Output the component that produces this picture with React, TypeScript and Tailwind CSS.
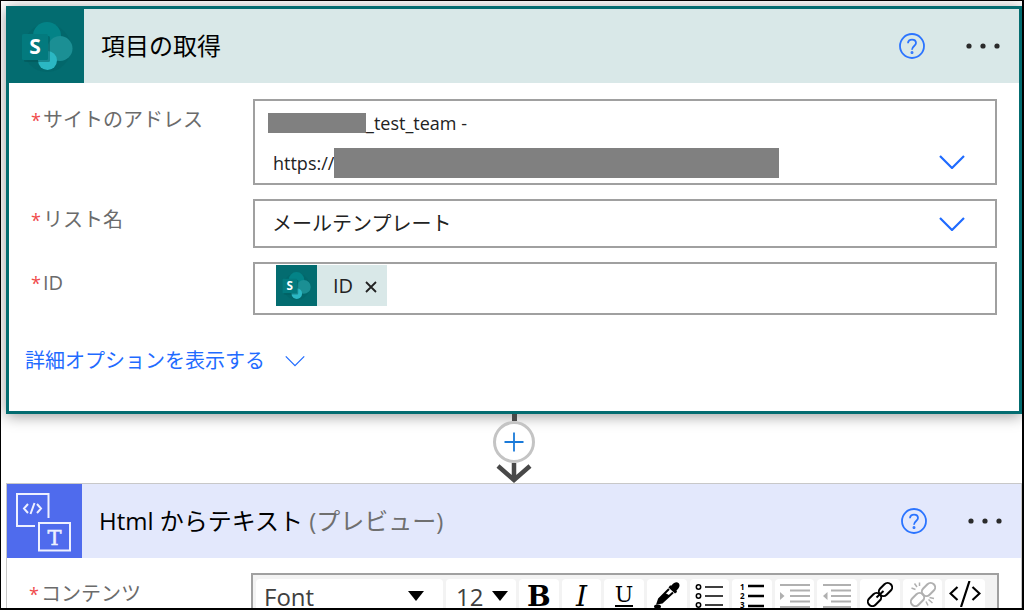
import type { ReactNode } from 'react';

const SITE_LINES = { name: '_test_team -', url: 'https://' };

function SharePointIcon({ className }: { className: string }) {
  return (
    <svg viewBox="0 0 52 52" className={className} aria-hidden="true">
      <circle cx="26" cy="28" r="24" fill="#025e62" opacity="0.35" />
      <circle cx="26" cy="16" r="14" fill="#038387" />
      <circle cx="39" cy="28.5" r="12.5" fill="#1b8f94" />
      <circle cx="26.5" cy="40.5" r="9.5" fill="#2bb7c3" />
      <rect x="3" y="16" width="26" height="26" rx="1.5" fill="#024f52" opacity="0.45" />
      <rect x="1" y="14" width="26" height="26" rx="1.5" fill="#037a7e" />
      <text x="14" y="34" textAnchor="middle" fontSize="21" fontWeight="700" fontFamily="Open Sans, sans-serif" fill="#fff">
        S
      </text>
    </svg>
  );
}

function HtmlToTextIcon() {
  return (
    <svg viewBox="0 0 74 74" className="w-[74px] h-[74px]" fill="none" stroke="#eef0ff" strokeWidth="2" aria-hidden="true">
      <path d="M28 42H10V10H41.500V34" />
      <path d="M21 20l-4 4.500l4 4.500M30 20l4 4.500l-4 4.500M27.500 19l-4 11" />
      <rect x="32" y="39" width="31" height="27.500" />
      <text x="47.500" y="60.500" textAnchor="middle" fontSize="21" fontFamily="DejaVu Serif, serif" fill="#eef0ff" stroke="#eef0ff" strokeWidth="0.500">
        T
      </text>
    </svg>
  );
}

function Chevron({ className, strokeWidth }: { className: string; strokeWidth: number }) {
  return (
    <svg viewBox="0 0 26 14" className={className} fill="none" stroke="#1f6bff" strokeWidth={strokeWidth} aria-hidden="true">
      <path d="M1 1L13 13L25 1" />
    </svg>
  );
}

function HeaderActions() {
  return (
    <div className="flex items-center gap-10 pr-[18px]">
      <button aria-label="ヘルプ">
        <svg viewBox="0 0 26 26" className="w-[26px] h-[26px]" fill="none" stroke="#2b74ff" strokeWidth="1.8">
          <circle cx="13" cy="13" r="12" />
          <path d="M9 10.300C9 7.800 10.700 6.600 13 6.600S17 8 17 10.100C17 13 13 13.200 13 16.800" />
          <circle cx="13" cy="19.600" r="0.600" fill="#2b74ff" />
        </svg>
      </button>
      <button aria-label="その他">
        <svg viewBox="0 0 36 8" className="w-9 h-2" fill="#2b2b2b">
          <circle cx="4" cy="4" r="2.600" />
          <circle cx="18" cy="4" r="2.600" />
          <circle cx="32" cy="4" r="2.600" />
        </svg>
      </button>
    </div>
  );
}

function FieldLabel({ htmlFor, children }: { htmlFor: string; children: ReactNode }) {
  return (
    <label htmlFor={htmlFor} className="flex pt-[7px] text-xl leading-7 text-[#6b6b6b]">
      <span className="w-3 text-lg leading-7 text-[#f04a4a]">*</span>
      {children}
    </label>
  );
}

function ToolButton({ label, disabled, children }: { label: string; disabled?: boolean; children: ReactNode }) {
  return (
    <button
      aria-label={label}
      disabled={disabled}
      className="flex-1 h-10 pt-1.5 flex items-start justify-center rounded-sm bg-white text-black disabled:text-[#b0b0b0]"
    >
      {children}
    </button>
  );
}

function Triangle() {
  return (
    <svg viewBox="0 0 16 10" className="w-4 h-2.5 absolute right-0 top-3 pointer-events-none" aria-hidden="true">
      <path d="M0 0H16L8 10Z" />
    </svg>
  );
}

function EditorToolbar() {
  return (
    <div className="flex gap-[3px] bg-[#f3f3f3] pt-1 pl-[3px] pr-3 pb-1">
      <div className="w-[187px] h-10 bg-white rounded-sm pl-1 pr-[19px]">
        <div className="relative">
          <select id="content" aria-label="フォント" className="w-full h-9 pl-1 appearance-none text-2xl leading-9 text-[#404040]">
            <option>Font</option>
          </select>
          <Triangle />
        </div>
      </div>
      <div className="w-[70px] h-10 bg-white rounded-sm pl-2 pr-2">
        <div className="relative">
          <select aria-label="フォント サイズ" className="w-full h-9 pl-0.5 appearance-none text-2xl leading-9 text-[#404040]">
            <option>12</option>
          </select>
          <Triangle />
        </div>
      </div>
      <ToolButton label="太字">
        <span className="font-['DejaVu_Serif',serif] font-bold text-[28px] leading-6">B</span>
      </ToolButton>
      <ToolButton label="斜体">
        <span className="font-['DejaVu_Serif',serif] italic text-[28px] leading-6">I</span>
      </ToolButton>
      <ToolButton label="下線">
        <span className="font-['DejaVu_Serif',serif] text-[22px] leading-5 border-b-2">U</span>
      </ToolButton>
      <ToolButton label="色">
        <svg viewBox="0 0 28 28" className="w-7 h-7 -mt-1">
          <path d="M18.500 4.500C21 1 24 0.500 25.500 2C27.500 4 26.500 7 23.500 9.500L24 11L22 12.500L15.500 6.500L17 4.500Z" />
          <path d="M16 8L6 18L4.500 22.500L9 21.500L20 11.500" fill="#fff" stroke="#000" strokeWidth="2" />
          <path d="M12 12L5.500 18.500L4.500 22.500L9 21.500L17 14.500Z" />
          <ellipse cx="4.500" cy="25.500" rx="3.500" ry="2" />
        </svg>
      </ToolButton>
      <ToolButton label="箇条書き">
        <svg viewBox="0 0 28 26" className="w-7 h-[26px] -mt-0.5" fill="none" stroke="currentColor" strokeWidth="1.500">
          <circle cx="3.500" cy="4" r="2.200" />
          <circle cx="3.500" cy="13" r="2.200" />
          <circle cx="3.500" cy="22" r="2.200" />
          <path d="M10 4H28M10 13H28M10 22H28" />
        </svg>
      </ToolButton>
      <ToolButton label="番号付きリスト">
        <svg viewBox="0 0 24 26" className="w-6 h-[26px] -mt-0.5" fill="none" stroke="currentColor" strokeWidth="2.500">
          <path d="M8 3H24M8 13H24M8 23H24" />
          <g stroke="none" fill="currentColor" fontSize="8" fontWeight="700" fontFamily="Open Sans, sans-serif">
            <text x="0" y="7">1</text>
            <text x="0" y="16">2</text>
            <text x="0" y="25">3</text>
          </g>
        </svg>
      </ToolButton>
      <ToolButton label="インデント" disabled>
        <svg viewBox="0 0 30 26" className="w-[30px] h-[26px] -mt-0.5" stroke="currentColor" strokeWidth="1.800">
          <path d="M0 2H30M10 7.500H30M10 13H30M10 18.500H30M0 24H30" />
          <path d="M0 9L4.500 13L0 17Z" fill="currentColor" stroke="none" />
        </svg>
      </ToolButton>
      <ToolButton label="インデント解除" disabled>
        <svg viewBox="0 0 28 26" className="w-7 h-[26px] -mt-0.5" stroke="currentColor" strokeWidth="1.800">
          <path d="M0 2H28M8 7.500H28M8 13H28M8 18.500H28M0 24H28" />
          <path d="M4.500 9L0 13L4.500 17Z" fill="currentColor" stroke="none" />
        </svg>
      </ToolButton>
      <ToolButton label="リンク">
        <svg viewBox="0 0 26 26" className="w-[26px] h-[26px] -mt-1" fill="none" stroke="currentColor" strokeWidth="2">
          <rect x="11" y="4" width="15" height="9" rx="4.500" transform="rotate(-45 18.500 8.500)" />
          <rect x="0" y="14" width="15" height="9" rx="4.500" transform="rotate(-45 7.500 18.500)" />
          <path d="M9.500 16.500L16.500 10" />
        </svg>
      </ToolButton>
      <ToolButton label="リンク解除" disabled>
        <svg viewBox="0 0 26 26" className="w-[26px] h-[26px] -mt-1" fill="none" stroke="currentColor" strokeWidth="2">
          <rect x="11" y="4" width="15" height="9" rx="4.500" transform="rotate(-45 18.500 8.500)" />
          <rect x="0" y="14" width="15" height="9" rx="4.500" transform="rotate(-45 7.500 18.500)" />
          <path d="M1.500 7L5.500 8.500M4.500 2.500L7 6M9.500 1.500V5M16 20.500L18 24.500M18.500 18.500L22.500 22M19.500 16.500L24 17.500" strokeWidth="1.500" />
        </svg>
      </ToolButton>
      <ToolButton label="コード表示">
        <svg viewBox="0 0 32 26" className="w-8 h-[26px] -mt-1" fill="none" stroke="currentColor" strokeWidth="2.200">
          <path d="M8.500 6L1.500 12.500L8.500 19M23.500 6L30.500 12.500L23.500 19M20.500 0L12 26" />
        </svg>
      </ToolButton>
    </div>
  );
}

export default function App() {
  return (
    <div className="h-screen overflow-hidden border-t border-l border-r-2 border-b-2 border-black bg-white pt-[5px] pl-[5px] font-['Open_Sans','Noto_Sans_CJK_JP',sans-serif]">
      {/* 項目の取得 */}
      <section className="border-[3px] border-[#036c70] bg-white shadow-[0_2px_14px_rgba(0,0,0,0.4)]">
        <header className="flex items-center bg-[#d9e8e8]">
          <div className="w-[75px] h-[74px] flex items-center justify-center bg-[#036c70]">
            <SharePointIcon className="w-[52px] h-[52px]" />
          </div>
          <h2 className="flex-1 pl-[17px] text-2xl text-black">項目の取得</h2>
          <HeaderActions />
        </header>

        <div className="grid grid-cols-[222px_1fr] gap-y-3.5 pt-4 pl-[22px] pr-[22px]">
          <FieldLabel htmlFor="site">サイトのアドレス</FieldLabel>
          <button
            id="site"
            aria-haspopup="listbox"
            className="flex items-end justify-between border-2 border-[#a0a0a0] pl-[13px] pr-[30px] text-left text-lg leading-10 text-[#222]"
          >
            <span className="block pt-0.5">
              <span className="flex items-center h-10">
                <span className="w-[98px] h-5 bg-[#808080]" />
                {SITE_LINES.name}
              </span>
              <span className="flex items-center h-10 pl-[5px]">
                {SITE_LINES.url}
                <span className="w-[445px] h-[30px] bg-[#808080]" />
              </span>
            </span>
            <Chevron className="w-[26px] h-3.5 mb-3.5" strokeWidth={2.2} />
          </button>

          <FieldLabel htmlFor="list">リスト名</FieldLabel>
          <div className="relative h-[49px] border-2 border-[#a0a0a0]">
            <select id="list" className="w-full h-full appearance-none pl-[17px] pr-16 text-xl text-[#222]">
              <option>メールテンプレート</option>
            </select>
            <Chevron className="absolute right-[30px] top-4 w-[26px] h-3.5 pointer-events-none" strokeWidth={2.2} />
          </div>

          <FieldLabel htmlFor="item-id">ID</FieldLabel>
          <div className="flex h-[53px] border-2 border-[#a0a0a0] pl-[21px] pt-px">
            <span className="flex h-[41px] items-center bg-[#d9e8e8] text-xl text-[#222]">
              <span className="flex w-[41px] h-[41px] items-center justify-center bg-[#036c70]">
                <SharePointIcon className="w-[29px] h-[29px]" />
              </span>
              <span className="pl-4">ID</span>
              <button aria-label="削除" className="ml-3 mr-2.5 pt-0.5">
                <svg viewBox="0 0 12 12" className="w-3 h-3" stroke="#222" strokeWidth="1.800">
                  <path d="M1 1L11 11M11 1L1 11" />
                </svg>
              </button>
            </span>
            <input id="item-id" className="flex-1 min-w-0 px-2 text-xl outline-none" />
          </div>
        </div>

        <div className="pt-8 pb-9 pl-4">
          <button className="flex items-center gap-5 text-xl leading-7 text-[#1f6bff]">
            詳細オプションを表示する
            <Chevron className="w-5 h-3" strokeWidth={1.6} />
          </button>
        </div>
      </section>

      <div className="flex flex-col items-center">
        <div className="w-[5px] h-[7px] bg-[#484848]" />
        <button aria-label="新しいステップの挿入" className="w-[42px] h-[42px] flex items-center justify-center rounded-full border-[3px] border-[#c4c4c4] bg-white">
          <svg viewBox="0 0 20 20" className="w-5 h-5" stroke="#1a7ad9" strokeWidth="1.800">
            <path d="M10 0.500V19.500M0.500 10H19.500" />
          </svg>
        </button>
        <svg viewBox="0 0 36 20" className="w-9 h-5" fill="none" stroke="#484848" strokeWidth="4.500" aria-hidden="true">
          <path d="M18 0V16M2 3L18 17L34 3" />
        </svg>
      </div>

      {/* Html からテキスト */}
      <section className="border border-[#c8c8c8] bg-white">
        <header className="flex items-center bg-[#e3e8fc]">
          <div className="w-[75px] h-[74px] bg-[#4f6bed]">
            <HtmlToTextIcon />
          </div>
          <h2 className="flex-1 pl-[17px] text-2xl text-black">
            Html からテキスト <span className="text-[#6f6f6f]">(プレビュー)</span>
          </h2>
          <HeaderActions />
        </header>
        <div className="grid grid-cols-[222px_1fr] pt-[15px] pl-[22px] pr-[22px]">
          <FieldLabel htmlFor="content">コンテンツ</FieldLabel>
          <div className="border-2 border-[#a0a0a0]">
            <EditorToolbar />
          </div>
        </div>
      </section>
    </div>
  );
}
